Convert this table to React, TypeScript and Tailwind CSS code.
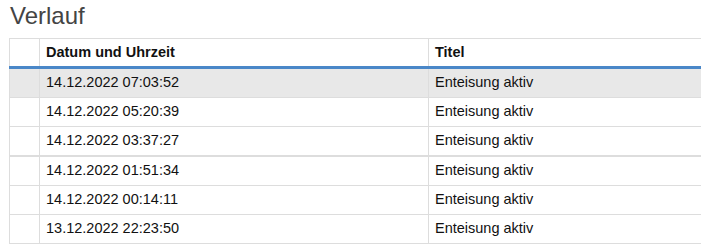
import React from "react";

const rows = [
  "14.12.2022 07:03:52",
  "14.12.2022 05:20:39",
  "14.12.2022 03:37:27",
  "14.12.2022 01:51:34",
  "14.12.2022 00:14:11",
  "13.12.2022 22:23:50",
];

export default function App() {
  return (
    <div className="w-[701px] h-[245px] bg-white overflow-hidden" style={{ fontFamily: '"Liberation Sans", Arial, sans-serif' }}>
      <div className="pl-[10px] pt-[2px] h-[38px] text-[24px] leading-[28px] text-[#444]">Verlauf</div>
      <div className="ml-[9px] w-[692px] text-[14.5px] text-[#111]">
        <div className="grid grid-cols-[30px_389px_1fr] border-t border-[#ddd] border-b-[3px] border-b-[#4a87c8] h-[31px]">
          <div className="border-l border-[#ddd]" />
          <div className="border-l border-[#ddd] pl-[6px] font-bold flex items-center">Datum und Uhrzeit</div>
          <div className="border-l border-[#ddd] pl-[6px] font-bold flex items-center">Titel</div>
        </div>
        {rows.map((r, i) => (
          <div
            key={i}
            className={
              "grid grid-cols-[30px_389px_1fr] border-[#ddd] " +
              (i === 2 ? "border-b-2 h-[30px] " : "border-b h-[29px] ") +
              (i === 0 ? "bg-[#e8e8e8]" : "bg-white")
            }
          >
            <div className="border-l border-[#ddd]" />
            <div className="border-l border-[#ddd] pl-[6px] flex items-center">{r}</div>
            <div className="border-l border-[#ddd] pl-[6px] flex items-center">Enteisung aktiv</div>
          </div>
        ))}
      </div>
    </div>
  );
}
